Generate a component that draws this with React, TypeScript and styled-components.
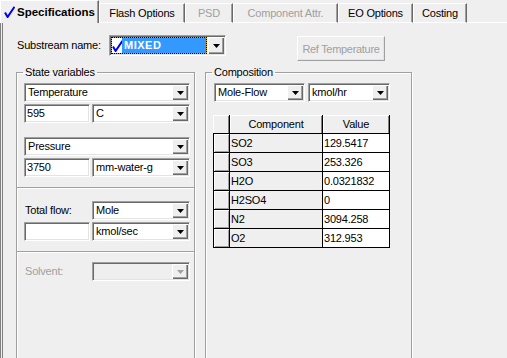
import React from 'react';
import styled, { createGlobalStyle } from 'styled-components';

const GlobalStyle = createGlobalStyle`
  html, body {
    margin: 0;
    padding: 0;
    background: #efefef;
  }
  body {
    font-family: 'Liberation Sans', Arial, sans-serif;
    font-size: 11px;
    color: #000;
  }
`;

const Window = styled.div`
  width: 507px;
  height: 358px;
  overflow: hidden;
  background: #efefef;
  display: flex;
  flex-direction: column;
  letter-spacing: -0.2px;
`;

const TabStrip = styled.div`
  display: flex;
  align-items: flex-end;
  height: 23px;
  flex: none;
`;

const Tab = styled.div<{ $w: number; $active?: boolean; $disabled?: boolean }>`
  box-sizing: border-box;
  width: ${p => p.$w}px;
  height: ${p => (p.$active ? 23 : 20)}px;
  display: flex;
  align-items: center;
  justify-content: center;
  gap: 2px;
  border-top: 1px solid #fff;
  border-left: 1px solid #fff;
  border-right: 1px solid #696969;
  border-bottom: ${p => (p.$active ? 'none' : '1px solid #fff')};
  box-shadow: inset -1px 0 #a0a0a0;
  color: ${p => (p.$disabled ? '#a0a0a0' : '#000')};
  font-weight: ${p => (p.$active ? 700 : 400)};
  font-size: ${p => (p.$active ? '11.5px' : '11px')};
  letter-spacing: ${p => (p.$active ? '0' : '-0.2px')};
  white-space: nowrap;
`;

const TabFiller = styled.div`
  flex: 1;
  border-bottom: 1px solid #fff;
`;

const Panel = styled.div`
  flex: 1;
  border-left: 3px double #808080;
  padding: 12px 0 0 13px;
`;

const TopRow = styled.div`
  display: flex;
  align-items: flex-start;
  height: 25px;
`;

const Label = styled.span<{ $w: number; $h?: number; $disabled?: boolean }>`
  width: ${p => p.$w}px;
  flex: none;
  padding-left: 1px;
  box-sizing: border-box;
  line-height: ${p => p.$h ?? 19}px;
  color: ${p => (p.$disabled ? '#a0a0a0' : '#000')};
  white-space: nowrap;
`;

const Combo = styled.div<{ $w?: number; $h?: number; $disabled?: boolean }>`
  box-sizing: border-box;
  height: ${p => p.$h ?? 19}px;
  display: flex;
  align-items: stretch;
  ${p => (p.$w ? `width: ${p.$w}px; flex: none;` : 'flex: 1; min-width: 0;')}
  border: 1px solid;
  border-color: #a0a0a0 #fff #fff #a0a0a0;
  box-shadow: inset 1px 1px #696969, inset -1px -1px #e3e3e3;
  padding: 1px;
  background: ${p => (p.$disabled ? '#efefef' : '#fff')};
`;

const ComboText = styled.span`
  flex: 1;
  padding-left: 2px;
  line-height: 15px;
  white-space: nowrap;
  overflow: hidden;
`;

const DropButton = styled.span`
  width: 16px;
  flex: none;
  display: flex;
  align-items: center;
  justify-content: center;
  background: #efefef;
  box-shadow: inset 1px 1px #fff, inset -1px -1px #696969, inset -2px -2px #a0a0a0;
`;

const Focus = styled.div`
  flex: 1;
  display: flex;
  margin-right: 1px;
  border: 1px dotted #000;
  background: #e49a2c;
`;

const CheckArea = styled.span`
  width: 10px;
  flex: none;
  background: #fff;
  display: flex;
  align-items: center;
  overflow: visible;
`;

const Highlight = styled.span`
  flex: 1;
  background: #3399ff;
  color: #fff;
  font-weight: 700;
  letter-spacing: 0.5px;
  line-height: 15px;
  padding-left: 2px;
`;

const Edit = styled.div<{ $w: number }>`
  box-sizing: border-box;
  width: ${p => p.$w}px;
  flex: none;
  height: 19px;
  border: 1px solid;
  border-color: #a0a0a0 #fff #fff #a0a0a0;
  box-shadow: inset 1px 1px #696969, inset -1px -1px #e3e3e3;
  background: #fff;
  padding: 1px 1px 0 2px;
  line-height: 15px;
`;

const PushButton = styled.button`
  width: 88px;
  height: 25px;
  margin: 1px 0 0 71px;
  padding: 0;
  font: inherit;
  letter-spacing: -0.3px;
  color: #a0a0a0;
  background: #efefef;
  border: 1px solid;
  border-color: #fff #a0a0a0 #a0a0a0 #fff;
  box-shadow: inset -1px -1px #e3e3e3;
`;

const GroupRow = styled.div`
  display: flex;
  gap: 10px;
  margin-top: 6px;
`;

const Group = styled.fieldset<{ $w: number }>`
  box-sizing: border-box;
  width: ${p => p.$w}px;
  height: 310px;
  min-width: 0;
  margin: 0;
  padding: 4px 4px 0 7px;
  border: 1px solid #a0a0a0;
  box-shadow: inset 1px 1px #fff, 1px 1px #fff;
`;

const Legend = styled.legend`
  padding: 0 2px;
  margin-left: -1px;
  line-height: 13px;
`;

const FieldRow = styled.div<{ $top?: number; $gap?: number }>`
  display: flex;
  align-items: center;
  gap: ${p => p.$gap ?? 2}px;
  margin-top: ${p => p.$top ?? 0}px;
`;

const Separator = styled.div<{ $top: number }>`
  margin: ${p => p.$top}px -4px 0 -7px;
  border-top: 1px solid #a0a0a0;
  border-bottom: 1px solid #fff;
`;

const Grid = styled.div`
  display: grid;
  grid-template-columns: 17px 93px 67px;
  grid-auto-rows: 19px;
  width: 177px;
  margin-top: 13px;
`;

const HeadCell = styled.div<{ $corner?: boolean }>`
  box-sizing: border-box;
  background: #efefef;
  border-right: 1px solid #000;
  border-bottom: 1px solid #000;
  box-shadow: inset 1px 1px #fff, inset -1px 0 #808080;
  display: flex;
  align-items: center;
  justify-content: center;
`;

const RowHead = styled.div`
  box-sizing: border-box;
  background: #efefef;
  border-left: 1px solid #000;
  border-right: 1px solid #000;
  border-bottom: 1px solid #000;
  box-shadow: inset 1px 1px #fff, inset -1px -1px #a0a0a0;
`;

const Cell = styled.div<{ $white?: boolean }>`
  box-sizing: border-box;
  background: ${p => (p.$white ? '#fff' : '#efefef')};
  border-right: 1px solid #000;
  border-bottom: 1px solid #000;
  padding-left: 1px;
  line-height: 18px;
  white-space: nowrap;
  overflow: hidden;
`;

const Arrow = ({ disabled }: { disabled?: boolean }) => (
  <svg width="7" height="4" viewBox="0 0 7 4">
    <polygon points="0,0 7,0 3.5,4" fill={disabled ? '#a0a0a0' : '#000'} />
  </svg>
);

const Check = () => (
  <svg width="11" height="12" viewBox="0 0 11 12" style={{ flex: 'none' }}>
    <path d="M1 6.5 L3.6 11 L10.5 0.8" stroke="#0000ee" strokeWidth="2" fill="none" />
  </svg>
);

type ComboProps = { value?: string; w?: number; disabled?: boolean };

const ComboBox = ({ value, w, disabled }: ComboProps) => (
  <Combo $w={w} $disabled={disabled}>
    <ComboText>{value}</ComboText>
    <DropButton>
      <Arrow disabled={disabled} />
    </DropButton>
  </Combo>
);

const rows: [string, string][] = [
  ['SO2', '129.5417'],
  ['SO3', '253.326'],
  ['H2O', '0.0321832'],
  ['H2SO4', '0'],
  ['N2', '3094.258'],
  ['O2', '312.953'],
];

const tabs = [
  { label: 'Flash Options', w: 86 },
  { label: 'PSD', w: 48, disabled: true },
  { label: 'Component Attr.', w: 105, disabled: true },
  { label: 'EO Options', w: 75 },
  { label: 'Costing', w: 54 },
];

const App: React.FC = () => {
  return (
    <Window>
      <GlobalStyle />
      <TabStrip>
        <Tab $w={99} $active>
          <Check />
          Specifications
        </Tab>
        {tabs.map(t => (
          <Tab key={t.label} $w={t.w} $disabled={t.disabled}>
            {t.label}
          </Tab>
        ))}
        <TabFiller />
      </TabStrip>
      <Panel>
        <TopRow>
          <Label $w={93} $h={21}>Substream name:</Label>
          <Combo $w={117} $h={21}>
            <Focus>
              <CheckArea>
                <Check />
              </CheckArea>
              <Highlight>MIXED</Highlight>
            </Focus>
            <DropButton>
              <Arrow />
            </DropButton>
          </Combo>
          <PushButton disabled>Ref Temperature</PushButton>
        </TopRow>
        <GroupRow>
          <Group $w={179}>
            <Legend>State variables</Legend>
            <FieldRow>
              <ComboBox value="Temperature" />
            </FieldRow>
            <FieldRow $top={2}>
              <Edit $w={66}>595</Edit>
              <ComboBox value="C" />
            </FieldRow>
            <FieldRow $top={14}>
              <ComboBox value="Pressure" />
            </FieldRow>
            <FieldRow $top={2}>
              <Edit $w={66}>3750</Edit>
              <ComboBox value="mm-water-g" />
            </FieldRow>
            <Separator $top={10} />
            <FieldRow $top={12} $gap={0}>
              <Label $w={68}>Total flow:</Label>
              <ComboBox value="Mole" />
            </FieldRow>
            <FieldRow $top={2}>
              <Edit $w={66} />
              <ComboBox value="kmol/sec" />
            </FieldRow>
            <Separator $top={10} />
            <FieldRow $top={9} $gap={0}>
              <Label $w={68} $disabled>Solvent:</Label>
              <ComboBox disabled />
            </FieldRow>
          </Group>
          <Group $w={207}>
            <Legend>Composition</Legend>
            <FieldRow $gap={3} style={{ marginLeft: 1 }}>
              <ComboBox value="Mole-Flow" w={91} />
              <ComboBox value="kmol/hr" w={82} />
            </FieldRow>
            <Grid>
              <HeadCell $corner />
              <HeadCell>Component</HeadCell>
              <HeadCell>Value</HeadCell>
              {rows.map(([name, value]) => (
                <React.Fragment key={name}>
                  <RowHead />
                  <Cell>{name}</Cell>
                  <Cell $white>{value}</Cell>
                </React.Fragment>
              ))}
            </Grid>
          </Group>
        </GroupRow>
      </Panel>
    </Window>
  );
};

export default App;
